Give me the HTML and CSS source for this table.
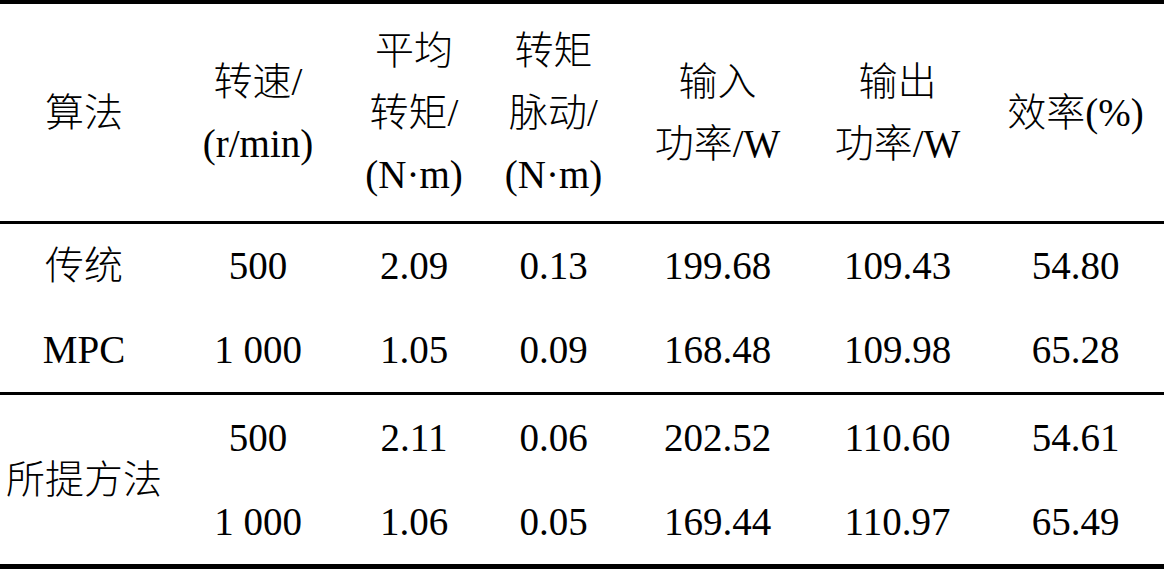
FILE: index.html
```html
<!DOCTYPE html>
<html lang="zh-CN">
<head>
    <meta charset="UTF-8">
    <meta name="viewport" content="width=device-width, initial-scale=1.0">
    <title>算法性能对比</title>
    <link rel="stylesheet" href="styles.css">
</head>
<body>
    <table class="result-table">
        <colgroup>
            <col class="col-algo">
            <col class="col-speed">
            <col class="col-torque">
            <col class="col-ripple">
            <col class="col-pin">
            <col class="col-pout">
            <col class="col-eff">
        </colgroup>
        <thead>
            <tr class="head-row">
                <th>算法</th>
                <th>转速/<br>(r/min)</th>
                <th>平均<br>转矩/<br>(N·m)</th>
                <th>转矩<br>脉动/<br>(N·m)</th>
                <th>输入<br>功率/W</th>
                <th>输出<br>功率/W</th>
                <th>效率(%)</th>
            </tr>
        </thead>
        <tbody>
            <!-- 传统 MPC -->
            <tr class="row">
                <td>传统</td>
                <td>500</td>
                <td>2.09</td>
                <td>0.13</td>
                <td>199.68</td>
                <td>109.43</td>
                <td>54.80</td>
            </tr>
            <tr class="row">
                <td>MPC</td>
                <td>1 000</td>
                <td>1.05</td>
                <td>0.09</td>
                <td>168.48</td>
                <td>109.98</td>
                <td>65.28</td>
            </tr>
            <!-- 所提方法 -->
            <tr class="row group-start">
                <td rowspan="2" class="group-name">所提方法</td>
                <td>500</td>
                <td>2.11</td>
                <td>0.06</td>
                <td>202.52</td>
                <td>110.60</td>
                <td>54.61</td>
            </tr>
            <tr class="row last-row">
                <td>1 000</td>
                <td>1.06</td>
                <td>0.05</td>
                <td>169.44</td>
                <td>110.97</td>
                <td>65.49</td>
            </tr>
        </tbody>
    </table>
</body>
</html>
```

FILE: styles.css
```css
body {
    margin: 0;
    background: #fff;
    color: #000;
    font-family: "Liberation Serif", "Noto Sans CJK SC", serif;
}

.result-table {
    width: 1164px;
    table-layout: fixed;
    border-collapse: separate;
    border-spacing: 0;
    font-size: 39px;
    font-weight: 300;
}

.col-algo { width: 168px; }
.col-speed { width: 180px; }
.col-torque { width: 132px; }
.col-ripple { width: 147px; }
.col-pin { width: 181px; }
.col-pout { width: 179px; }
.col-eff { width: 177px; }

th, td {
    padding: 0;
    text-align: center;
    vertical-align: middle;
    font-weight: 300;
    white-space: nowrap;
}

.head-row {
    height: 224px;
}

.head-row th {
    line-height: 62px;
    border-top: 4px solid #000;
    border-bottom: 3px solid #000;
}

.row {
    height: 84px;
    line-height: 40px;
}

.group-start {
    height: 88px;
}

.group-start td {
    border-top: 3px solid #000;
}

.last-row {
    height: 89px;
}

.last-row td,
.group-name {
    border-bottom: 5px solid #000;
}
```
